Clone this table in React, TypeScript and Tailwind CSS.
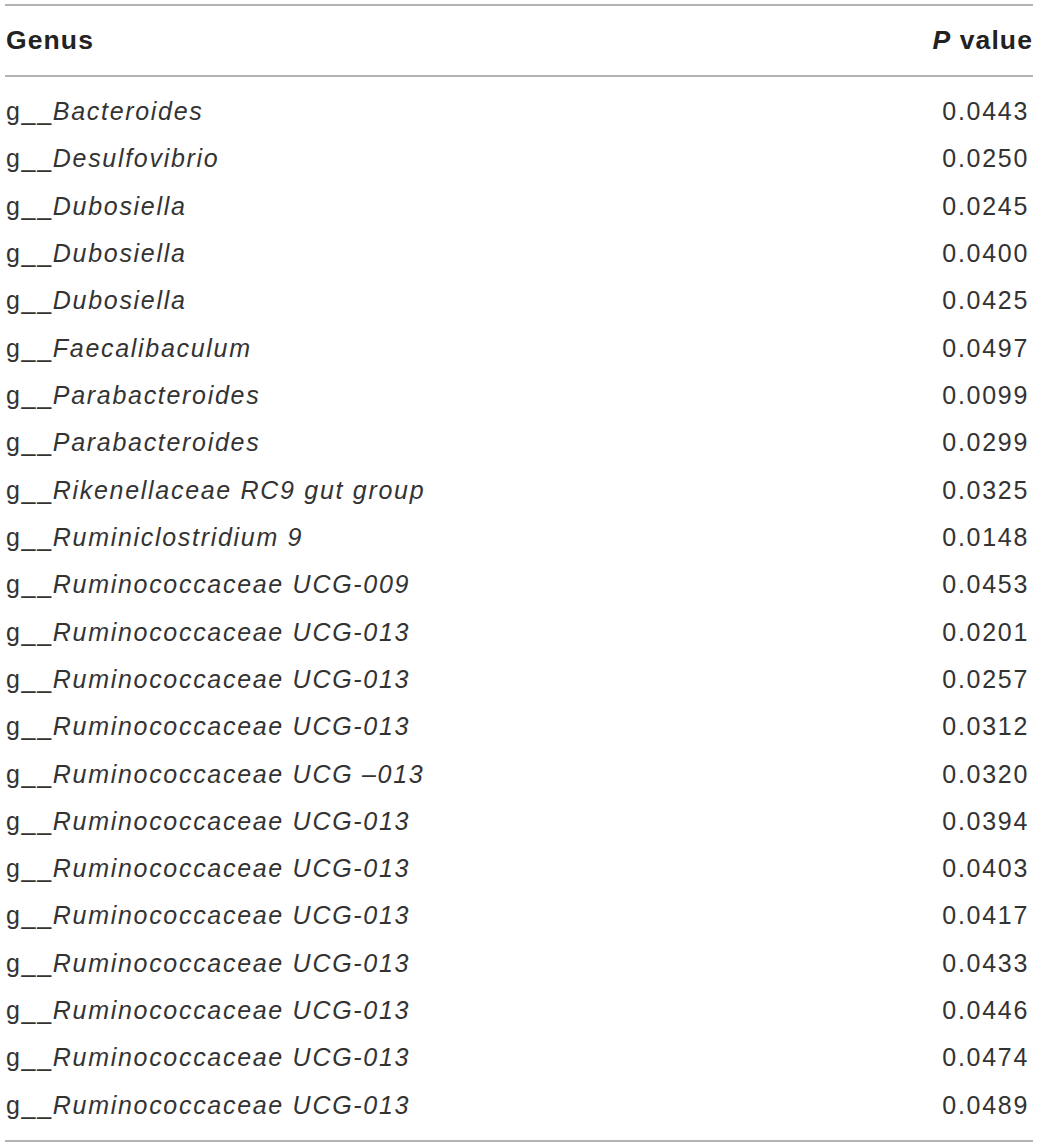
const rows: [string, string][] = [
  ["Bacteroides", "0.0443"],
  ["Desulfovibrio", "0.0250"],
  ["Dubosiella", "0.0245"],
  ["Dubosiella", "0.0400"],
  ["Dubosiella", "0.0425"],
  ["Faecalibaculum", "0.0497"],
  ["Parabacteroides", "0.0099"],
  ["Parabacteroides", "0.0299"],
  ["Rikenellaceae RC9 gut group", "0.0325"],
  ["Ruminiclostridium 9", "0.0148"],
  ["Ruminococcaceae UCG-009", "0.0453"],
  ["Ruminococcaceae UCG-013", "0.0201"],
  ["Ruminococcaceae UCG-013", "0.0257"],
  ["Ruminococcaceae UCG-013", "0.0312"],
  ["Ruminococcaceae UCG –013", "0.0320"],
  ["Ruminococcaceae UCG-013", "0.0394"],
  ["Ruminococcaceae UCG-013", "0.0403"],
  ["Ruminococcaceae UCG-013", "0.0417"],
  ["Ruminococcaceae UCG-013", "0.0433"],
  ["Ruminococcaceae UCG-013", "0.0446"],
  ["Ruminococcaceae UCG-013", "0.0474"],
  ["Ruminococcaceae UCG-013", "0.0489"],
];

export default function App() {
  return (
    <div className="w-[1039px] h-[1148px] bg-white pt-[4px] pl-[5px] font-['Liberation_Sans',Arial,sans-serif] text-[#333]">
      <div className="w-[1028px] border-t-2 border-b-2 border-[#b3b3b3]">
        <div className="flex items-center justify-between h-[71px] border-b-2 border-[#b3b3b3] pl-[1px] pr-0 text-[26.5px] tracking-[1.1px] font-bold text-[#222]">
          <span>Genus</span>
          <span>
            <i>P</i> value
          </span>
        </div>
        <div className="pt-[11px] pb-[11px]">
          {rows.map(([name, p], i) => (
            <div key={i} className="flex items-center justify-between h-[47.33px] pl-[1px] pr-[4px] text-[25px] tracking-[1.7px]">
              <span>
                g__<i>{name}</i>
              </span>
              <span>{p}</span>
            </div>
          ))}
        </div>
      </div>
    </div>
  );
}
